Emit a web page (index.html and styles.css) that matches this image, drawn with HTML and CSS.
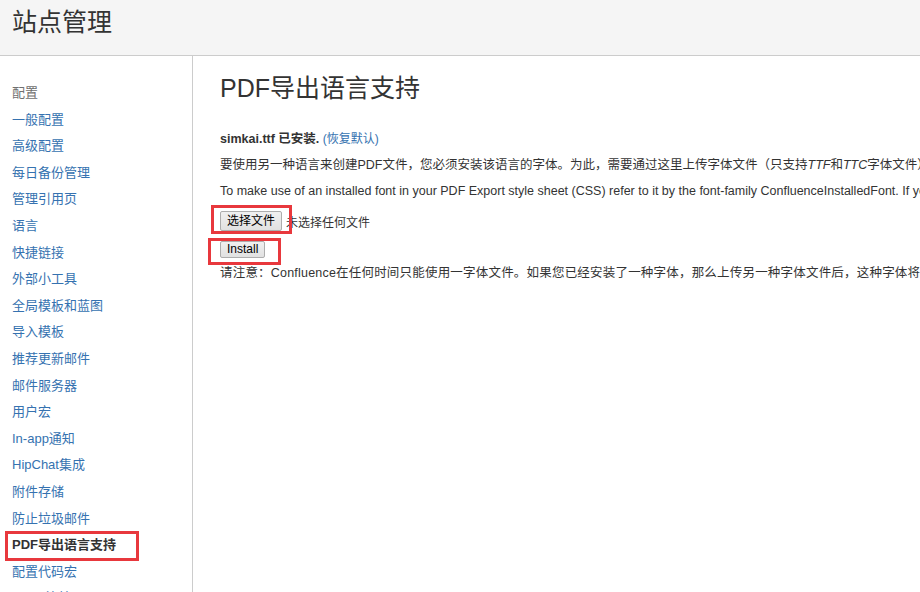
FILE: index.html
```
<!DOCTYPE html>
<html lang="zh-CN">
<head>
    <meta charset="UTF-8">
    <meta name="viewport" content="width=device-width, initial-scale=1.0">
    <title>站点管理 - PDF导出语言支持</title>
    <link rel="stylesheet" href="styles.css">
</head>
<body>
    <div class="page-header">
        <h1>站点管理</h1>
    </div>
    <div class="page-body">
        <div class="sidebar">
            <div class="nav-heading">配置</div>
            <a class="nav-item" href="#">一般配置</a>
            <a class="nav-item" href="#">高级配置</a>
            <a class="nav-item" href="#">每日备份管理</a>
            <a class="nav-item" href="#">管理引用页</a>
            <a class="nav-item" href="#">语言</a>
            <a class="nav-item" href="#">快捷链接</a>
            <a class="nav-item" href="#">外部小工具</a>
            <a class="nav-item" href="#">全局模板和蓝图</a>
            <a class="nav-item" href="#">导入模板</a>
            <a class="nav-item" href="#">推荐更新邮件</a>
            <a class="nav-item" href="#">邮件服务器</a>
            <a class="nav-item" href="#">用户宏</a>
            <a class="nav-item" href="#">In-app通知</a>
            <a class="nav-item" href="#">HipChat集成</a>
            <a class="nav-item" href="#">附件存储</a>
            <a class="nav-item" href="#">防止垃圾邮件</a>
            <a class="nav-item active marked" href="#">PDF导出语言支持</a>
            <a class="nav-item" href="#">配置代码宏</a>
            <a class="nav-item" href="#">Office连接器</a>
        </div>
        <div class="main">
            <h2>PDF导出语言支持</h2>
            <p><strong>simkai.ttf 已安装.</strong> <a class="small-link" href="#">(恢复默认)</a></p>
            <p>要使用另一种语言来创建PDF文件，您必须安装该语言的字体。为此，需要通过这里上传字体文件（只支持<em>TTF</em>和<em>TTC</em>字体文件）。</p>
            <p>To make use of an installed font in your PDF Export style sheet (CSS) refer to it by the font-family ConfluenceInstalledFont. If you want to use a different font, upload it here.</p>
            <div class="file-row">
                <span class="btn marked">选择文件</span>
                <span class="file-name">未选择任何文件</span>
            </div>
            <div class="install-row">
                <span class="btn btn-small marked">Install</span>
            </div>
            <p class="note">请注意：Confluence在任何时间只能使用一字体文件。如果您已经安装了一种字体，那么上传另一种字体文件后，这种字体将失效。</p>
        </div>
    </div>
</body>
</html>
```

FILE: styles.css
```
body {
    font-family: 'Liberation Sans', 'Noto Sans CJK SC', sans-serif;
    font-size: 13px;
    color: #333;
    margin: 0;
    padding: 0;
    background-color: #fff;
    width: 920px;
    height: 592px;
    overflow: hidden;
}

a {
    text-decoration: none;
}

.page-header {
    height: 55px;
    background-color: #f5f5f5;
    border-bottom: 1px solid #ccc;
}

.page-header h1 {
    margin: 0;
    padding: 6px 0 0 12px;
    font-size: 25px;
    font-weight: normal;
    line-height: 32px;
    color: #333;
}

.page-body {
    display: flex;
    height: 536px;
}

.sidebar {
    width: 193px;
    flex-shrink: 0;
    border-right: 1px solid #ccc;
    padding-top: 24px;
    box-sizing: border-box;
}

.nav-heading,
.nav-item {
    display: block;
    padding-left: 12px;
    line-height: 26.6px;
    font-size: 13px;
    white-space: nowrap;
}

.nav-heading {
    color: #707070;
}

.nav-item {
    color: #3572b0;
}

.nav-item.active {
    color: #333;
    font-weight: bold;
}

.main {
    flex: 1;
    padding: 0 0 0 27px;
    overflow: hidden;
    white-space: nowrap;
    font-size: 12.5px;
}

.main h2 {
    margin: 16px 0 26px;
    font-size: 25px;
    font-weight: normal;
    line-height: 32px;
    color: #333;
}

.main p {
    margin: 0 0 7px;
    line-height: 19px;
}

.small-link {
    color: #3572b0;
    font-size: 12px;
}

.file-row {
    display: flex;
    align-items: center;
    margin-top: 10px;
    font-size: 12px;
}

.install-row {
    margin-top: 10px;
    display: flex;
}

.btn {
    display: inline-block;
    padding: 0 6px;
    height: 18px;
    line-height: 18px;
    border: 1px solid #adadad;
    border-radius: 2px;
    background: linear-gradient(#f0f0f0, #e1e1e1);
    color: #000;
    font-size: 12px;
}

.btn-small {
    height: 15px;
    line-height: 15px;
    padding: 0 6px;
}

.file-name {
    margin-left: 4px;
}

.main p.note {
    margin-top: 6px;
    letter-spacing: 0.2px;
}

.marked {
    position: relative;
}

.marked::after {
    content: "";
    position: absolute;
    border: 3px solid #e8383d;
    pointer-events: none;
}

.nav-item.marked::after {
    left: 5px;
    right: 53px;
    top: -1px;
    bottom: -2px;
}

.file-row .marked::after {
    left: -10px;
    right: -11px;
    top: -7px;
    bottom: -4px;
}

.install-row .marked::after {
    left: -13px;
    right: -17px;
    top: -4px;
    bottom: -8px;
}
```
